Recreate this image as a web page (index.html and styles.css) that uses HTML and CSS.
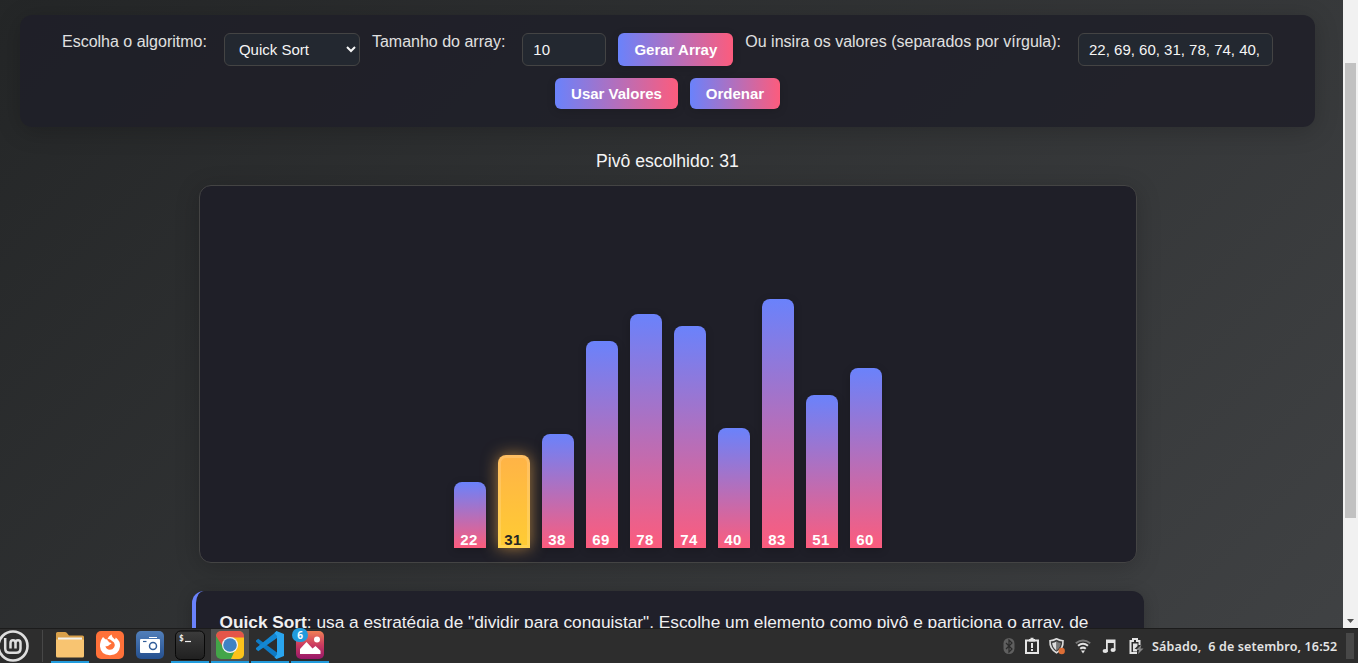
FILE: index.html
```html
<!DOCTYPE html>
<html lang="pt-BR">
<head>
<meta charset="utf-8">
<title>Visualizador de Ordenação</title>
<link rel="stylesheet" href="styles.css">
</head>
<body>
<div class="screen">
  <div class="browser">
    <main class="page">
      <section class="controls">
        <label class="field-label" for="algo">Escolha o algoritmo:</label>
        <select class="field select" id="algo"><option>Quick Sort</option></select>
        <label class="field-label" for="size">Tamanho do array:</label>
        <input class="field size" id="size" type="text" value="10">
        <button class="btn btn-generate">Gerar Array</button>
        <label class="field-label" for="values">Ou insira os valores (separados por vírgula):</label>
        <input class="field values" id="values" type="text" value="22, 69, 60, 31, 78, 74, 40, 83, 51, 38">
        <button class="btn btn-use">Usar Valores</button>
        <button class="btn btn-sort">Ordenar</button>
      </section>
      <p class="status">Pivô escolhido: 31</p>
      <section class="chart">
        <div class="bar" style="height:66px">22</div>
        <div class="bar pivot" style="height:93px">31</div>
        <div class="bar" style="height:114px">38</div>
        <div class="bar" style="height:207px">69</div>
        <div class="bar" style="height:234px">78</div>
        <div class="bar" style="height:222px">74</div>
        <div class="bar" style="height:120px">40</div>
        <div class="bar" style="height:249px">83</div>
        <div class="bar" style="height:153px">51</div>
        <div class="bar" style="height:180px">60</div>
      </section>
      <section class="description"><span class="desc-text"><b>Quick Sort</b>: usa a estratégia de "dividir para conquistar". Escolhe um elemento como pivô e particiona o array, de</span></section>
    </main>
    <div class="scrollbar">
      <div class="thumb"></div>
      <svg class="arrow" width="15" height="15" viewBox="0 0 15 15"><path d="M4 6h7L7.500 10z" fill="#505050"/></svg>
    </div>
  </div>
  <footer class="taskbar">
    <svg class="mint" width="30" height="34" viewBox="0 0 30 34" fill="none" stroke="#dedede">
      <circle cx="13" cy="17" r="14.500" stroke-width="2.600"/>
      <path d="M5.200 9V19.500q0 4.300 4.300 4.300h6.700q4.300 0 4.300-4.300v-5.500q0-2.700-2.500-2.700T15.500 14v5.500M15.500 14q0-2.700-2.500-2.700T10.500 14v5.500" stroke-width="2.500"/>
    </svg>
    <div class="divider"></div>
    <div class="apps">
      <div class="app open">
        <svg width="30" height="30" viewBox="0 0 30 30"><path d="M1 3.500q0-1.500 1.500-1.500H10q1 0 1.700.8L14 5.500h13.500Q29 5.500 29 7V12H1z" fill="#d9a04a"/><path d="M3 7.500h24v4H3z" fill="#f4f1ea"/><path d="M1 9.500h27.500q.5 0 .5.500V26q0 1.500-1.500 1.500h-25Q1 27.500 1 26z" fill="#f8c471"/></svg>
      </div>
      <div class="app">
        <svg width="30" height="30" viewBox="0 0 30 30"><rect x="1" y="1" width="28" height="28" rx="5" fill="#ff7139"/><path d="M8 7l2.300 2.200 2 0Q13.500 6 16.500 4.500q.2 3 3.500 5l.8-2q4.700 3.500 4.200 9-.8 8.200-10 8.700-9.300-.3-10-8.700Q4.800 11 8 7z" fill="#fff"/><path d="M11.500 9.500q2-1 4 .2L19 12.500q1.500 2.300.2 4.700-1.500 2.600-4.400 2.600-3.500-.2-4.400-3.500l1.600 0q1.500-.2 2.500-1.500l2-1.300q-.2-1-2.500-1.200-.6-1.500-2.500-2.800z" fill="#ff7139"/></svg>
      </div>
      <div class="app">
        <svg width="30" height="30" viewBox="0 0 30 30"><defs><linearGradient id="blue" x2="0" y2="1"><stop stop-color="#527fba"/><stop offset="1" stop-color="#25508f"/></linearGradient></defs><rect x="1" y="1" width="28" height="28" rx="5" fill="url(#blue)"/><path d="M14 7h8v1h-8z" fill="#fff"/><rect x="5" y="9" width="20" height="14" rx="1" fill="#fff"/><path d="M8 11.500h3.500" stroke="#315d99" stroke-width="1.200"/><circle cx="18" cy="16" r="3.500" fill="#fff" stroke="#315d99" stroke-width="1.500"/></svg>
      </div>
      <div class="app open">
        <svg width="30" height="30" viewBox="0 0 30 30"><defs><linearGradient id="term" x2="0" y2="1"><stop stop-color="#3c3c3c"/><stop offset="1" stop-color="#202020"/></linearGradient></defs><rect x=".5" y="1" width="29" height="28.500" rx="5" fill="url(#term)" stroke="#080808"/><text x="4" y="11" class="prompt">$</text><path d="M10 11.500h6" stroke="#eee" stroke-width="1.200"/></svg>
      </div>
      <div class="app open active">
        <svg width="30" height="30" viewBox="0 0 30 30"><defs><clipPath id="tile"><rect x="1" y="1" width="28" height="28" rx="5"/></clipPath></defs><g clip-path="url(#tile)"><path d="M0 0h30v30H0z" fill="#43a548"/><path d="M0 0h30v8H15L8 17 1 6z" fill="#e45549"/><path d="M15 7.500h15V30H15.500l5.500-12z" fill="#fcc21b"/></g><circle cx="15" cy="15" r="8" fill="#f4f4f4"/><circle cx="15" cy="15" r="6.800" fill="#3e82c4"/></svg>
      </div>
      <div class="app open">
        <svg width="30" height="30" viewBox="0 0 30 30"><path d="M1 10.500l2.200-1.700L22 22.500V29L1 11.800z" fill="#0e7ac4"/><path d="M1 19.300l2.200 1.900L22 8V1L1 18z" fill="#1387d3"/><path d="M21.500 1L29 4v22l-7.500 3-2-1.500 2.500-3V6l-2.500-3z" fill="#2aa5ee"/></svg>
      </div>
      <div class="app open">
        <svg width="30" height="30" viewBox="0 0 30 30"><defs><linearGradient id="photo" x2="0" y2="1"><stop stop-color="#f08055"/><stop offset=".5" stop-color="#cb3b60"/><stop offset="1" stop-color="#971769"/></linearGradient></defs><rect x="1" y="1" width="28" height="28" rx="5" fill="url(#photo)"/><circle cx="22" cy="9.500" r="3" fill="#fff"/><path d="M5 24v-5l6.500-7 6 6.500 3-2.500 5 4.800V24z" fill="#fff"/></svg>
        <span class="badge">6</span>
      </div>
    </div>
    <div class="tray">
      <svg class="bluetooth" width="12" height="18" viewBox="0 0 12 18"><rect x=".5" y="1" width="11" height="16" rx="5.500" fill="#5f5f5f"/><path d="M3 6l6 6-3 3V3l3 3-6 6" fill="none" stroke="#2b2b2b" stroke-width="1.200"/></svg>
      <svg width="14" height="18" viewBox="0 0 14 18"><path d="M1 3.500h12v12.500H1z" fill="none" stroke="#e4e4e4" stroke-width="2"/><path d="M4 3V2h1.500V.8h3V2H10v2.500H4z" fill="#e4e4e4"/><path d="M7 6v5M7 12v2" stroke="#e4e4e4" stroke-width="2"/></svg>
      <svg width="18" height="18" viewBox="0 0 18 18"><path d="M8.500 1.800q3 1.700 6.500 2Q15.500 12 8.500 15.800 1.500 12 2 3.800q3.500-.3 6.500-2z" fill="#3b3b3b" stroke="#ddd" stroke-width="1.600"/><path d="M8.500 4.500v9Q4.500 11 4.200 6q2.500-.3 4.300-1.500z" fill="#ddd"/><path d="M8.500 4.500v9Q12.500 11 12.800 6q-2.500-.3-4.300-1.500z" fill="#777"/><circle cx="13.700" cy="14" r="3.200" fill="#dd6e36"/></svg>
      <svg class="wifi" width="16" height="18" viewBox="0 0 16 18" fill="none"><path d="M.8 6.200Q8 .8 15.200 6.200" stroke="#777" stroke-width="2"/><path d="M3 8.800q5-4 10 0M5.200 11.800q2.800-2.400 5.600 0" stroke="#e4e4e4" stroke-width="2"/><path d="M6 13.500h4l-2 3z" fill="#e4e4e4"/></svg>
      <svg class="music" width="14" height="18" viewBox="0 0 14 18"><path d="M4 2.500h9.500v11H11.800V6H5.800v9H4z" fill="#e4e4e4"/><ellipse cx="3.200" cy="14" rx="2.600" ry="2" fill="#e4e4e4"/><ellipse cx="11" cy="12.900" rx="2.500" ry="2" fill="#e4e4e4"/></svg>
      <svg width="15" height="18" viewBox="0 0 15 18"><path d="M8 16H1.500V4H4V2h4v2h2.500v4" fill="none" stroke="#e4e4e4" stroke-width="2"/><path d="M4 6.500h4.500V9L5.500 12H8v2.500H4z" fill="#e4e4e4"/><path d="M12.500 7.500L7 13h3l-1 4 5.500-5.500h-3z" fill="#888"/></svg>
    </div>
    <span class="clock">Sábado,&nbsp; 6 de setembro, 16:52</span>
    <div class="show-desktop"></div>
  </footer>
</div>
</body>
</html>
```
FILE: styles.css
```css
* { box-sizing: border-box; }
body { margin: 0; font-family: "Liberation Sans", Arial, sans-serif; }
.screen { width: 1358px; height: 663px; display: flex; flex-direction: column; overflow: hidden; }
.browser { flex: none; height: 628px; display: flex; overflow: hidden; }
.page {
  width: 1343px; height: 628px; padding: 15px 28px 0 20px; overflow: hidden;
  background: linear-gradient(135deg, #232526, #414345) 0 -85px / 1343px 826px no-repeat;
  display: flex; flex-direction: column; align-items: center;
}
.controls {
  flex: none; width: 1295px; height: 112px; padding: 18px 0; border-radius: 12px;
  background: rgba(30, 30, 40, .85); box-shadow: 0 4px 24px rgba(0, 0, 0, .2);
  display: flex; flex-wrap: wrap; justify-content: center; align-content: flex-start; gap: 12px;
}
.field-label { margin-right: 5px; font-size: 16px; line-height: 18px; color: #e0e0e0; white-space: nowrap; }
.field {
  height: 33px; padding: 6px 10px; border: 1px solid #444; border-radius: 6px;
  background: #232830; color: #f5f5f5; font: 15px "Liberation Sans", Arial, sans-serif; outline: none;
}
.select { width: 136px; }
.size { width: 84px; }
.values { width: 195px; }
.btn {
  padding: 0; border: 0; border-radius: 6px; color: #fff;
  background: linear-gradient(90deg, #6a82fb, #fc5c7d); box-shadow: 0 2px 8px rgba(0, 0, 0, .15);
  font: bold 15px "Liberation Sans", Arial, sans-serif;
}
.btn-generate { width: 115px; height: 33px; }
.btn-use { width: 123px; height: 31px; }
.btn-sort { width: 90px; height: 31px; }
.status { margin: 24px 0 14px; height: 20px; font-size: 17.6px; line-height: 20px; color: #f5f5f5; }
.chart {
  flex: none; width: 938px; height: 378px; padding: 0 0 14px; border: 1px solid #444; border-radius: 12px;
  background: #1f1f28; box-shadow: 0 4px 24px rgba(0, 0, 0, .2);
  display: flex; justify-content: center; align-items: flex-end; gap: 12px;
}
.bar {
  width: 32px; padding-right: 1px; border-radius: 8px 8px 0 0; color: #fff;
  background: linear-gradient(180deg, #6a82fb, #fc5c7d); box-shadow: 0 2px 8px rgba(0, 0, 0, .2);
  display: flex; align-items: flex-end; justify-content: center;
  font-size: 15px; font-weight: bold; line-height: 17px; letter-spacing: .5px;
}
.pivot {
  color: #232526; background: linear-gradient(180deg, #ffb347, #ffcc33);
  box-shadow: 0 0 16px rgba(255, 179, 71, .6), inset 0 0 0 3px rgba(255, 255, 255, .15);
}
.description {
  flex: none; width: 952px; height: 120px; margin-top: 28px; padding: 19px 0 0 24px;
  border-left: 4px solid #6a82fb; border-radius: 12px; background: #20202a;
  box-shadow: 0 2px 16px rgba(0, 0, 0, .2); color: #f0f0f0; font-size: 17.28px; line-height: 24px; white-space: nowrap;
}
.scrollbar { flex: none; width: 15px; height: 628px; background: #f1f1f1; display: flex; flex-direction: column; align-items: center; }
.thumb { width: 11px; height: 455px; margin-top: 63px; background: #c1c1c1; }
.arrow { margin-top: auto; }
.taskbar { flex: none; height: 35px; background: #2d2d2d; border-top: 1px solid #1c1c1c; display: flex; align-items: center; }
.mint { flex: none; }
.divider { width: 1px; height: 32px; margin-left: 12px; background: #474747; }
.apps { display: flex; gap: 2px; margin-left: 8px; height: 34px; }
.app { position: relative; width: 38px; height: 34px; padding: 1px 4px; }
.app svg { display: block; }
.open { border-bottom: 2px solid #219bdc; }
.active { background: #505050; }
.badge {
  position: absolute; left: 1px; top: -1px; width: 16px; height: 14px; border-radius: 7px;
  background: #219bdc; color: #fff; font: bold 10px/14px "Noto Sans", sans-serif; text-align: center;
}
.prompt { font: bold 8px "DejaVu Sans Mono", monospace; fill: #eee; }
.tray { margin-left: auto; display: flex; align-items: center; gap: 9px; }
.bluetooth { margin-right: 1px; }
.wifi { margin-right: 2px; }
.music { margin-right: 4px; }
.clock { width: 186px; margin-left: 8px; color: #e4e4e4; font: 600 12.5px "Noto Sans", sans-serif; letter-spacing: .15px; white-space: nowrap; }
.show-desktop { width: 8px; height: 26px; margin-left: 8px; margin-right: 4px; background: #484848; }
```
